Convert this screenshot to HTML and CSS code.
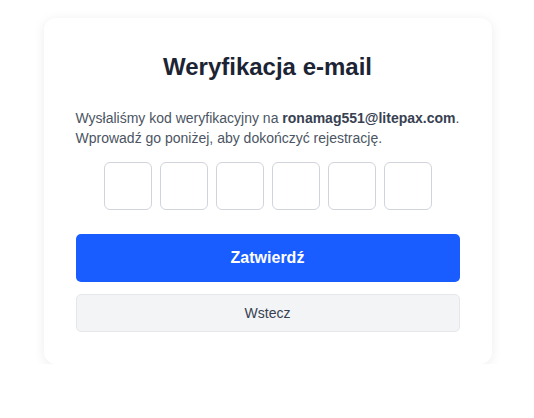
FILE: index.html
```html
<!DOCTYPE html>
<html lang="pl">
<head>
    <meta charset="UTF-8">
    <meta name="viewport" content="width=device-width, initial-scale=1.0">
    <title>Weryfikacja e-mail</title>
    <link rel="stylesheet" href="styles.css">
</head>
<body>
    <div class="card">
        <h1>Weryfikacja e-mail</h1>
        <p class="info">Wysłaliśmy kod weryfikacyjny na <strong>ronamag551@litepax.com</strong>. Wprowadź go poniżej, aby dokończyć rejestrację.</p>

        <div class="code-row">
            <input class="code-box" type="text" maxlength="1">
            <input class="code-box" type="text" maxlength="1">
            <input class="code-box" type="text" maxlength="1">
            <input class="code-box" type="text" maxlength="1">
            <input class="code-box" type="text" maxlength="1">
            <input class="code-box" type="text" maxlength="1">
        </div>

        <button class="btn-submit">Zatwierdź</button>
        <button class="btn-back">Wstecz</button>
    </div>
</body>
</html>
```

FILE: styles.css
```css
body { font-family: 'Liberation Sans', Arial, sans-serif; margin: 0; padding: 18px 0 0 1px; background-color: #ffffff; }
.card { width: 448px; box-sizing: border-box; margin: 0 auto; background: #fff; padding: 34px 32px 32px; border-radius: 12px; box-shadow: 0 2px 12px rgba(0,0,0,0.08); }
h1 { margin: 0 0 26px; font-size: 24px; line-height: 30px; text-align: center; color: #1c2434; }
.info { margin: 0 0 14px; font-size: 14px; line-height: 20px; color: #4b5563; }
.info strong { color: #374151; }
.code-row { display: flex; justify-content: center; gap: 8px; margin-bottom: 24px; }
.code-box { width: 48px; height: 48px; box-sizing: border-box; border: 1px solid #d1d5db; border-radius: 6px; font-size: 20px; text-align: center; padding: 0; }
.btn-submit { display: block; width: 100%; height: 48px; border: none; border-radius: 5px; background-color: #195cff; color: #fff; font-family: inherit; font-size: 16px; font-weight: bold; cursor: pointer; }
.btn-back { display: block; width: 100%; height: 38px; margin-top: 12px; border: 1px solid #e5e7eb; border-radius: 5px; background-color: #f3f4f6; color: #374151; font-family: inherit; font-size: 14px; cursor: pointer; }
```
